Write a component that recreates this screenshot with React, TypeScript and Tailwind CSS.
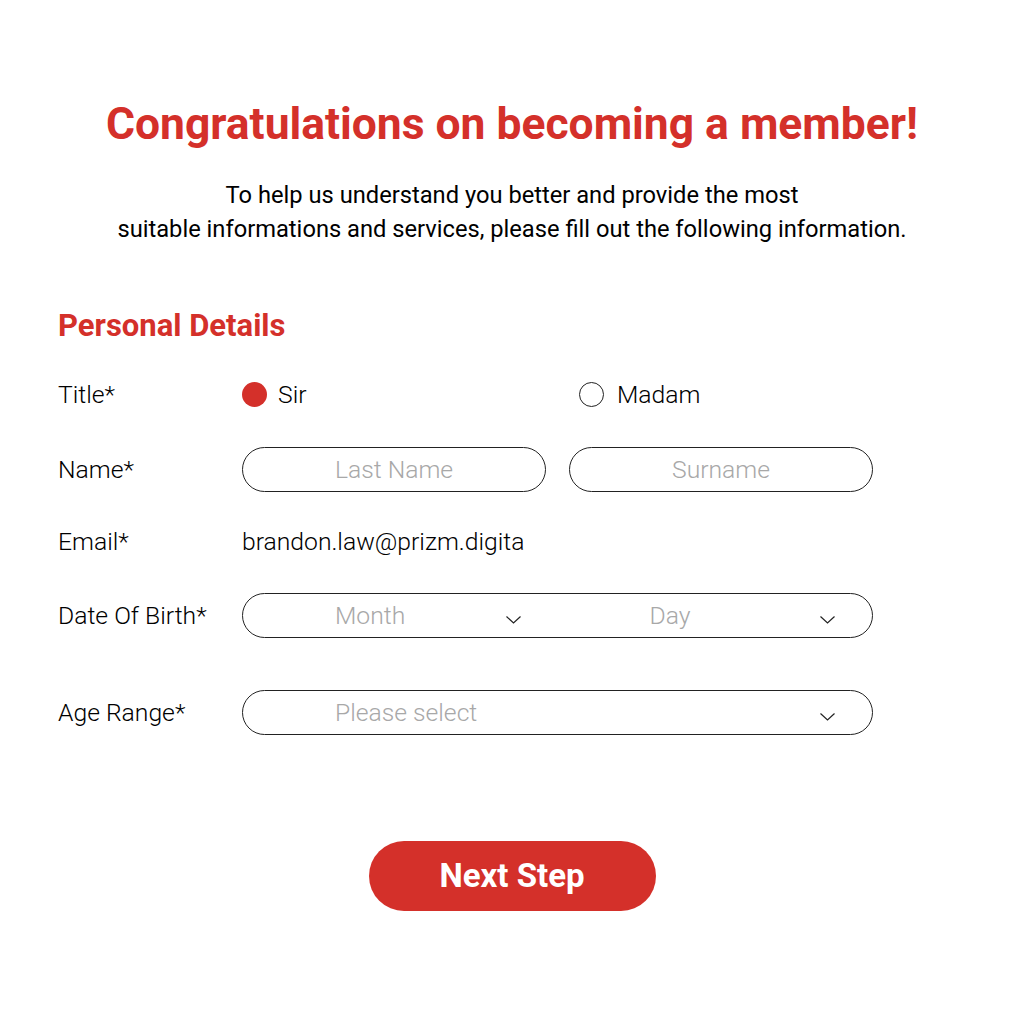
const RED = "text-[#d4302a]";

function Label({ children }: { children: string }) {
  return <div className="w-[184px] shrink-0 text-[24.7px] font-light text-black">{children}</div>;
}

function Pill({ placeholder }: { placeholder: string }) {
  return (
    <div className="flex h-[45px] w-[304px] items-center justify-center rounded-full border border-[#222] text-[24.7px] font-light text-[#a8a8a8]">
      {placeholder}
    </div>
  );
}

function Chevron() {
  return (
    <svg width="17" height="10" viewBox="0 0 17 10" className="mt-[9px]" fill="none">
      <polyline points="1.5,1.5 8.5,8 15.5,1.5" stroke="#222" strokeWidth="1.2" />
    </svg>
  );
}

function SelectPart({ placeholder }: { placeholder: string }) {
  return (
    <div className="flex flex-1 items-center pl-[92px] pr-[36px]">
      <span className="flex-1 text-[24.7px] font-light text-[#a8a8a8]">{placeholder}</span>
      <Chevron />
    </div>
  );
}

export default function App() {
  return (
    <div className="min-h-screen w-[1024px] bg-white font-['Roboto',sans-serif] text-black">
      <div className="pt-[98px] text-center">
        <h1 className={`text-[44.4px] font-bold leading-[52px] ${RED}`}>Congratulations on becoming a member!</h1>
        <p className="mt-[28px] text-[23.7px] leading-[34px]">
          To help us understand you better and provide the most
          <br />
          suitable informations and services, please fill out the following information.
        </p>
      </div>

      <div className="px-[58px] pt-[60px]">
        <h2 className={`text-[31px] font-bold leading-[40px] ${RED}`}>Personal Details</h2>

        <div className="mt-[27px] flex h-[44px] items-center">
          <Label>Title*</Label>
          <div className="flex w-[337px] items-center gap-[11px]">
            <span className="h-[25px] w-[25px] rounded-full bg-[#d4302a]" />
            <span className="text-[24.7px] font-light">Sir</span>
          </div>
          <div className="flex items-center gap-[13px]">
            <span className="h-[25px] w-[25px] rounded-full border border-[#222]" />
            <span className="text-[24.7px] font-light">Madam</span>
          </div>
        </div>

        <div className="mt-[30px] flex h-[45px] items-center">
          <Label>Name*</Label>
          <div className="flex gap-[23px]">
            <Pill placeholder="Last Name" />
            <Pill placeholder="Surname" />
          </div>
        </div>

        <div className="mt-[28px] flex h-[44px] items-center">
          <Label>Email*</Label>
          <span className="text-[24.7px] font-light">brandon.law@prizm.digita</span>
        </div>

        <div className="mt-[29px] flex h-[45px] items-center">
          <Label>Date Of Birth*</Label>
          <div className="flex h-[45px] w-[631px] rounded-full border border-[#222]">
            <SelectPart placeholder="Month" />
            <SelectPart placeholder="Day" />
          </div>
        </div>

        <div className="mt-[52px] flex h-[45px] items-center">
          <Label>Age Range*</Label>
          <div className="flex h-[45px] w-[631px] rounded-full border border-[#222]">
            <SelectPart placeholder="Please select" />
          </div>
        </div>
      </div>

      <div className="flex justify-center pt-[106px]">
        <button className="h-[70px] w-[287px] rounded-full bg-[#d4302a] text-[33px] font-bold text-white">
          Next Step
        </button>
      </div>
    </div>
  );
}
